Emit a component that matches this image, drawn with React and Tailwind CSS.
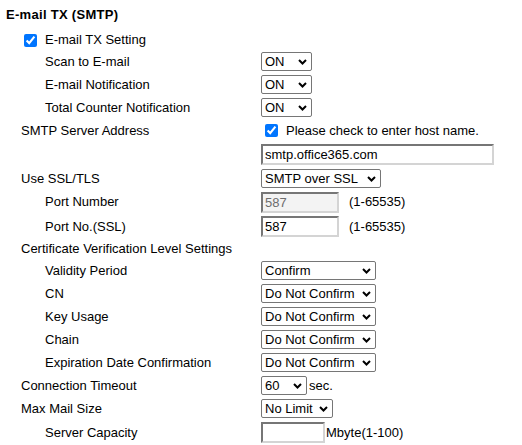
import { useState } from "react";

function Chevron() {
  return (
    <svg
      className="pointer-events-none absolute right-[5px] top-1/2 -translate-y-1/2"
      width="9"
      height="6"
      viewBox="0 0 9 6"
    >
      <path d="M1 1l3.5 3.5L8 1" fill="none" stroke="#000" strokeWidth="2" />
    </svg>
  );
}

function Select({ value, options, width }) {
  const [val, setVal] = useState(value);
  return (
    <span className="relative inline-flex">
      <select
        value={val}
        onChange={(e) => setVal(e.target.value)}
        style={{ width }}
        className="h-[19px] appearance-none rounded-[2px] border border-[#767676] bg-white pl-[3px] pr-[14px] text-[13px] leading-[17px] text-black outline-none"
      >
        {options.map((o) => (
          <option key={o}>{o}</option>
        ))}
      </select>
      <Chevron />
    </span>
  );
}

function TextInput({ value, width, disabled }) {
  return (
    <input
      type="text"
      defaultValue={value}
      disabled={disabled}
      style={{ width }}
      className={
        "h-[21px] border-2 border-t-[#767676] border-l-[#767676] border-b-[#d4d4d4] border-r-[#d4d4d4] px-[2px] text-[13px] outline-none " +
        (disabled ? "bg-[#f3f3f3] text-[#6d6d6d]" : "bg-white text-black")
      }
    />
  );
}

function Row({ label, indent = 1, h = "h-[23px]", children }) {
  return (
    <div className={"flex items-center " + h}>
      <div
        className={
          "w-[261px] shrink-0 " + (indent === 2 ? "pl-[45px]" : "pl-[21px]")
        }
      >
        {label}
      </div>
      <div className="flex items-center">{children}</div>
    </div>
  );
}

const onOff = ["ON", "OFF"];
const confirm = ["Confirm", "Do Not Confirm"];

export default function App() {
  return (
    <div className="min-h-screen bg-white font-['Liberation_Sans',Arial,sans-serif] text-[13px] text-black">
      <div className="flex h-[30px] items-center pl-[6px] text-[13px] font-bold tracking-[0.3px]">
        E-mail TX (SMTP)
      </div>

      <div className="flex h-[20px] items-center pl-[24px]">
        <input type="checkbox" defaultChecked className="m-0 h-[13px] w-[13px]" />
        <span className="ml-[8px]">E-mail TX Setting</span>
      </div>

      <Row label="Scan to E-mail" indent={2}>
        <Select value="ON" options={onOff} width={51} />
      </Row>
      <Row label="E-mail Notification" indent={2}>
        <Select value="ON" options={onOff} width={51} />
      </Row>
      <Row label="Total Counter Notification" indent={2}>
        <Select value="ON" options={onOff} width={51} />
      </Row>

      <Row label="SMTP Server Address">
        <label className="flex items-center pl-[4px]">
          <input type="checkbox" defaultChecked className="m-0 h-[13px] w-[13px]" />
          <span className="ml-[8px]">Please check to enter host name.</span>
        </label>
      </Row>
      <Row label="" h="h-[25px]">
        <TextInput value="smtp.office365.com" width={233} />
      </Row>

      <Row label="Use SSL/TLS">
        <Select
          value="SMTP over SSL"
          options={["OFF", "SMTP over SSL", "STARTTLS"]}
          width={120}
        />
      </Row>
      <Row label="Port Number" indent={2} h="h-[24px]">
        <TextInput value="587" width={78} disabled />
        <span className="ml-[10px]">(1-65535)</span>
      </Row>
      <Row label="Port No.(SSL)" indent={2} h="h-[25px]">
        <TextInput value="587" width={78} />
        <span className="ml-[10px]">(1-65535)</span>
      </Row>

      <Row label="Certificate Verification Level Settings" h="h-[20px]" />
      <Row label="Validity Period" indent={2}>
        <Select value="Confirm" options={confirm} width={115} />
      </Row>
      <Row label="CN" indent={2}>
        <Select value="Do Not Confirm" options={confirm} width={115} />
      </Row>
      <Row label="Key Usage" indent={2}>
        <Select value="Do Not Confirm" options={confirm} width={115} />
      </Row>
      <Row label="Chain" indent={2}>
        <Select value="Do Not Confirm" options={confirm} width={115} />
      </Row>
      <Row label="Expiration Date Confirmation" indent={2}>
        <Select value="Do Not Confirm" options={confirm} width={115} />
      </Row>

      <Row label="Connection Timeout">
        <Select value="60" options={["30", "60", "90", "120"]} width={46} />
        <span className="ml-[2px]">sec.</span>
      </Row>
      <Row label="Max Mail Size">
        <Select value="No Limit" options={["No Limit", "Limit"]} width={72} />
      </Row>
      <Row label="Server Capacity" indent={2} h="h-[25px]">
        <TextInput value="" width={64} />
        <span className="ml-[1px]">Mbyte(1-100)</span>
      </Row>
    </div>
  );
}
